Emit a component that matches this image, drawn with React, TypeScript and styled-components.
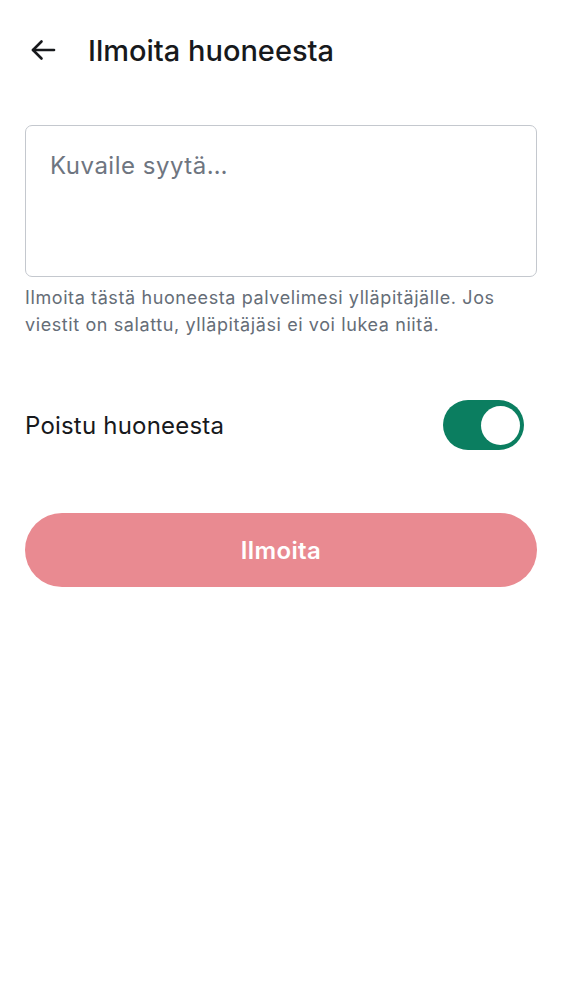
import React, { useState } from "react";
import styled, { createGlobalStyle } from "styled-components";

const Global = createGlobalStyle`
  html, body { margin: 0; padding: 0; background: #ffffff; }
  body { font-family: Inter, "Noto Sans", sans-serif; -webkit-font-smoothing: antialiased; }
  * { box-sizing: border-box; }
`;

const Page = styled.div`
  width: 562px;
  min-height: 1000px;
  background: #ffffff;
  display: flex;
  flex-direction: column;
`;

const Header = styled.header`
  height: 100px;
  display: flex;
  align-items: center;
  padding: 0 0 0 28px;
  gap: 30px;
`;

const BackButton = styled.button`
  border: none;
  background: none;
  padding: 0;
  width: 30px;
  height: 30px;
  display: flex;
  align-items: center;
  justify-content: center;
  color: #17191c;
  cursor: pointer;
`;

const Title = styled.h1`
  margin: 0;
  font-family: Inter, sans-serif;
  font-size: 29px;
  font-weight: 500;
  color: #17191c;
`;

const Content = styled.main`
  padding: 25px 25px 0 25px;
  display: flex;
  flex-direction: column;
`;

const TextArea = styled.textarea`
  width: 512px;
  height: 152px;
  border: 1.5px solid #c4c8ce;
  border-radius: 7px;
  padding: 25px 24px;
  resize: none;
  font-family: Inter, sans-serif;
  font-size: 24px;
  letter-spacing: 0.5px;
  color: #17191c;
  outline: none;
  &::placeholder { color: #6e7580; }
`;

const Help = styled.p`
  margin: 7px 0 0 0;
  font-family: Inter, sans-serif;
  font-size: 18px;
  line-height: 27px;
  letter-spacing: 0.6px;
  color: #656d77;
`;

const ToggleRow = styled.label`
  margin-top: 62px;
  display: flex;
  align-items: center;
  justify-content: space-between;
  height: 50px;
  padding-right: 13px;
`;

const ToggleLabel = styled.span`
  font-family: Inter, sans-serif;
  font-size: 24px;
  letter-spacing: 0.2px;
  color: #17191c;
`;

const Switch = styled.button<{ $on: boolean }>`
  width: 81px;
  height: 50px;
  border-radius: 25px;
  border: none;
  padding: 0 4px;
  display: flex;
  align-items: center;
  justify-content: ${(p) => (p.$on ? "flex-end" : "flex-start")};
  background: ${(p) => (p.$on ? "#0b7e60" : "#c4c8ce")};
  cursor: pointer;
`;

const Thumb = styled.span`
  width: 39px;
  height: 39px;
  border-radius: 50%;
  background: #ffffff;
`;

const Submit = styled.button`
  margin-top: 63px;
  width: 512px;
  height: 74px;
  border: none;
  border-radius: 37px;
  background: #e98a91;
  color: #ffffff;
  font-family: Inter, sans-serif;
  font-size: 24px;
  font-weight: 600;
  letter-spacing: 0.4px;
  cursor: pointer;
`;

export default function App() {
  const [on, setOn] = useState(true);
  return (
    <Page>
      <Global />
      <Header>
        <BackButton aria-label="Takaisin">
          <svg width="26" height="22" viewBox="0 0 26 22" fill="none" stroke="#17191c" strokeWidth="2.6" strokeLinecap="round" strokeLinejoin="round">
            <path d="M24 11H3" />
            <path d="M11.5 2.5L3 11l8.5 8.5" />
          </svg>
        </BackButton>
        <Title>Ilmoita huoneesta</Title>
      </Header>
      <Content>
        <TextArea placeholder="Kuvaile syytä…" />
        <Help>
          Ilmoita tästä huoneesta palvelimesi ylläpitäjälle. Jos viestit on salattu, ylläpitäjäsi ei voi lukea niitä.
        </Help>
        <ToggleRow>
          <ToggleLabel>Poistu huoneesta</ToggleLabel>
          <Switch $on={on} onClick={() => setOn(!on)} aria-pressed={on}>
            <Thumb />
          </Switch>
        </ToggleRow>
        <Submit>Ilmoita</Submit>
      </Content>
    </Page>
  );
}
